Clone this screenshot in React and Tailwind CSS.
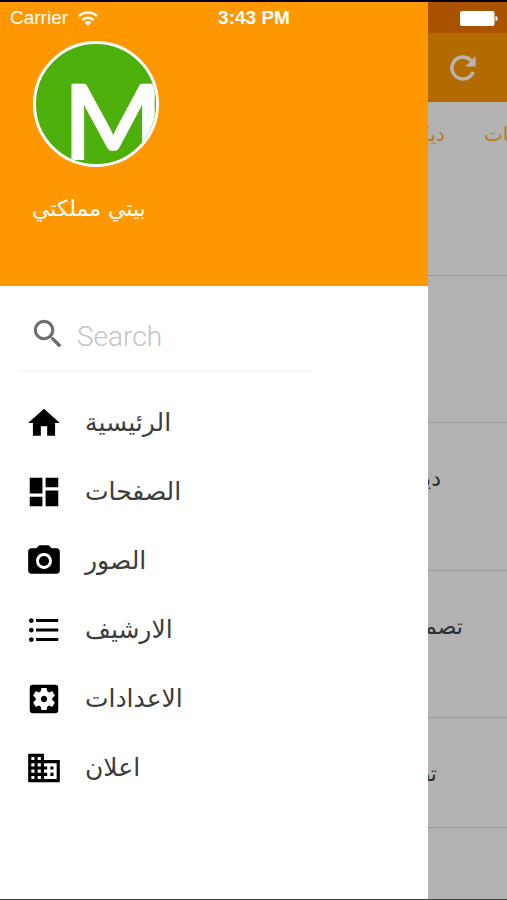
import React from 'react';
import {
  MdCameraAlt,
  MdDashboard,
  MdDomain,
  MdFormatListBulleted,
  MdSearch,
  MdSettingsApplications,
} from 'react-icons/md';

const HomeIcon = ({ className }) => (
  <svg viewBox="0 0 24 24" fill="currentColor" className={className} aria-hidden="true">
    <path d="M10 20v-6h4v6h5v-8h3L12 3 2 12h3v8z" />
  </svg>
);

const RefreshIcon = ({ className }) => (
  <svg viewBox="0 0 26 26" fill="none" stroke="currentColor" strokeWidth="3.4" className={className} aria-hidden="true">
    <path d="M23.200 16.800A11 11 0 1 1 21 5.500" />
    <path d="M25.600 1v10.400H15.200z" fill="currentColor" stroke="none" />
  </svg>
);

const menuItems = [
  { label: 'الرئيسية', icon: HomeIcon },
  { label: 'الصفحات', icon: MdDashboard },
  { label: 'الصور', icon: MdCameraAlt },
  { label: 'الارشيف', icon: MdFormatListBulleted },
  { label: 'الاعدادات', icon: MdSettingsApplications },
  { label: 'اعلان', icon: MdDomain },
];

const posts = [
  { title: '', className: 'h-[147px]' },
  { title: 'ديكور', className: 'h-[148px] pr-[66px] pt-10' },
  { title: 'تصميم', className: 'h-[147px] pr-[44px] pt-10' },
  { title: 'تصميم', className: 'h-[110px] pr-[70px] pt-10' },
];

const StatusBar = () => (
  <div className="absolute inset-x-0 top-0 grid h-8 grid-cols-3 items-center pl-[10px] pr-[9px] font-['Liberation_Sans',sans-serif] text-[19px] text-white">
    <div className="flex items-center gap-[10px]">
      <span>Carrier</span>
      <svg viewBox="0 0 20 15" className="h-[15px] w-5" fill="none" stroke="currentColor" strokeWidth="2.6" aria-hidden="true">
        <path d="M1 5.200a12.800 12.800 0 0 1 18 0" />
        <path d="M4.400 9a8 8 0 0 1 11.200 0" />
        <path d="M6.600 11.200a4.500 4.500 0 0 1 6.800 0L10 14.800z" fill="currentColor" stroke="none" />
      </svg>
    </div>
    <span className="text-center font-bold">3:43 PM</span>
    <svg viewBox="0 0 38 15" className="h-[15px] w-[38px] justify-self-end" fill="currentColor" aria-hidden="true">
      <rect width="34.500" height="15" rx="2" />
      <path d="M35.500 5c3 .6 3 4.400 0 5z" />
    </svg>
  </div>
);

const Logo = () => (
  <div className="size-[126px] overflow-hidden rounded-full border-[3px] border-white bg-[#4caf0a]">
    <svg viewBox="0 0 120 120" className="size-full" role="img" aria-label="M">
      <text x="27" y="116" fontSize="106" fontWeight="700" fill="white" fontFamily="Lato, sans-serif">M</text>
    </svg>
  </div>
);

const Drawer = () => (
  <aside className="flex min-w-0 flex-1 flex-col bg-white">
    <header className="h-[284px] bg-[#ff9800] px-8 pt-[39px]">
      <div className="pl-px">
        <Logo />
      </div>
      <h1 dir="rtl" className="mt-[26px] w-fit text-[22px] leading-8 text-white">بيتي مملكتي</h1>
    </header>

    <label className="ml-5 mr-[115px] flex h-[86px] items-center gap-[10px] border-b-2 border-[#f5f5f5] pl-[9px] pt-3">
      <MdSearch className="size-[38px] shrink-0 text-[#6e6e6e]" aria-hidden="true" />
      <input
        type="search"
        aria-label="Search"
        placeholder="Search"
        className="w-full min-w-0 pt-[5px] font-[Roboto,sans-serif] text-[28px] font-light outline-none placeholder:text-[#c4c4c4]"
      />
    </label>

    <nav className="pt-4">
      <ul>
        {menuItems.map(({ label, icon: Icon }) => (
          <li key={label}>
            <a href="#" className="flex h-[69px] items-center gap-[22px] pl-[25px] pt-px text-black">
              <Icon className="size-[38px] shrink-0" />
              <span dir="rtl" className="text-[25px] leading-10 text-[#3c3c3c]">{label}</span>
            </a>
          </li>
        ))}
      </ul>
    </nav>
  </aside>
);

const Page = () => (
  <main className="w-[79px] shrink-0 overflow-hidden bg-[#b2b2b2]">
    <div className="h-[31px] bg-[#a95200]" />
    <div className="flex h-[69px] items-center bg-[#b26b00] pl-[22px]">
      <button type="button" aria-label="Refresh" className="text-[#b8b5b0]">
        <RefreshIcon className="size-[26px]" />
      </button>
    </div>
    <div className="flex h-[174px] border-b border-[#979797] pt-4 text-[20px] leading-8 text-[#bd7a1c]">
      <a href="#" dir="rtl" className="w-[17px] shrink-0 whitespace-nowrap">ديكور</a>
      <a href="#" dir="rtl" className="ml-[39px] shrink-0 whitespace-nowrap">ـات</a>
    </div>
    {posts.map(({ title, className }, i) => (
      <article key={i} dir="rtl" className={`border-b border-[#979797] text-[22px] leading-8 text-[#2e2e2e] ${className}`}>
        <h2 className="whitespace-nowrap">{title}</h2>
      </article>
    ))}
  </main>
);

const App = () => {
  return (
    <div className="relative flex min-h-screen overflow-hidden border-b border-t-2 border-b-[#444] border-t-black bg-white font-['DejaVu_Sans',sans-serif]">
      <Drawer />
      <Page />
      <StatusBar />
    </div>
  );
};

export default App;
